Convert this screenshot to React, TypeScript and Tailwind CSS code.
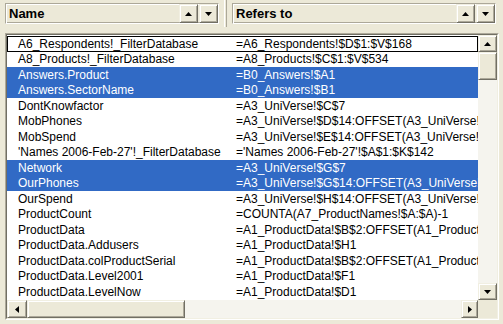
import React from "react";

const ROWS: [string, string, boolean][] = [
  ["A6_Respondents!_FilterDatabase", "=A6_Respondents!$D$1:$V$168", false],
  ["A8_Products!_FilterDatabase", "=A8_Products!$C$1:$V$534", false],
  ["Answers.Product", "=B0_Answers!$A1", true],
  ["Answers.SectorName", "=B0_Answers!$B1", true],
  ["DontKnowfactor", "=A3_UniVerse!$C$7", false],
  ["MobPhones", "=A3_UniVerse!$D$14:OFFSET(A3_UniVerse!$D$14,0,0)", false],
  ["MobSpend", "=A3_UniVerse!$E$14:OFFSET(A3_UniVerse!$E$14,0,0)", false],
  ["'Names 2006-Feb-27'!_FilterDatabase", "='Names 2006-Feb-27'!$A$1:$K$142", false],
  ["Network", "=A3_UniVerse!$G$7", true],
  ["OurPhones", "=A3_UniVerse!$G$14:OFFSET(A3_UniVerse!$G$14,0,0)", true],
  ["OurSpend", "=A3_UniVerse!$H$14:OFFSET(A3_UniVerse!$H$14,0,0)", false],
  ["ProductCount", "=COUNTA(A7_ProductNames!$A:$A)-1", false],
  ["ProductData", "=A1_ProductData!$B$2:OFFSET(A1_ProductData!$B$2,0,0)", false],
  ["ProductData.Addusers", "=A1_ProductData!$H1", false],
  ["ProductData.colProductSerial", "=A1_ProductData!$B$2:OFFSET(A1_ProductData!$B$2,0,0)", false],
  ["ProductData.Level2001", "=A1_ProductData!$F1", false],
  ["ProductData.LevelNow", "=A1_ProductData!$D1", false],
  ["ProductData.Sel2001", "=A1_ProductData!$E1", false],
];

function Arrow({ dir }: { dir: "up" | "down" | "left" | "right" }) {
  const pts = {
    up: "0,4 3.5,0 7,4",
    down: "0,0 7,0 3.5,4",
    left: "4,0 4,7 0,3.5",
    right: "0,0 0,7 4,3.5",
  }[dir];
  const vert = dir === "up" || dir === "down";
  return (
    <svg width={vert ? 7 : 4} height={vert ? 4 : 7} viewBox={vert ? "0 0 7 4" : "0 0 4 7"}>
      <polygon points={pts} fill="#000" />
    </svg>
  );
}

const raised =
  "bg-[#ece9d8] border border-t-[#f1efe2] border-l-[#f1efe2] border-r-[#716f64] border-b-[#716f64] shadow-[inset_1px_1px_0_#fff,inset_-1px_-1px_0_#aca899]";

function Btn({ dir, className = "" }: { dir: "up" | "down" | "left" | "right"; className?: string }) {
  return (
    <div className={`flex items-center justify-center shrink-0 ${raised} ${className}`}>
      <Arrow dir={dir} />
    </div>
  );
}

function HeaderBox({ label, className }: { label: string; className: string }) {
  return (
    <div
      className={`flex items-center h-[21px] border border-t-[#aca899] border-l-[#aca899] border-r-white border-b-white shadow-[inset_1px_1px_0_#fff,inset_-1px_-1px_0_#aca899] ${className}`}
    >
      <span className="flex-1 pl-[3px] font-bold text-[13px] text-black">{label}</span>
      <Btn dir="up" className="w-[19px] h-[19px]" />
      <Btn dir="down" className="w-[19px] h-[19px] ml-[1px]" />
    </div>
  );
}

export default function App() {
  return (
    <div
      className="w-[503px] h-[324px] bg-[#ece9d8] overflow-hidden"
      style={{ fontFamily: '"Liberation Sans", Arial, sans-serif' }}
    >
      <div className="flex items-start h-[33px] pt-[3px] pl-[5px]">
        <HeaderBox label="Name" className="w-[214px]" />
        <div className="w-[13px] h-[27px] -mt-[3px] flex justify-center">
          <div className="w-[3px] h-full border-l border-l-white border-r border-r-[#aca899]" />
        </div>
        <HeaderBox label="Refers to" className="w-[264px]" />
      </div>

      <div className="ml-[5px] w-[494px] h-[287px] border border-t-[#aca899] border-l-[#aca899] border-r-white border-b-white">
        <div className="flex h-full border border-t-[#716f64] border-l-[#716f64] border-r-[#f1efe2] border-b-[#f1efe2]">
          <div className="flex flex-col flex-1 min-w-0">
            <div className="flex-1 bg-white overflow-hidden pt-[1px]">
              {ROWS.map(([name, ref, sel], i) => (
                <div
                  key={i}
                  className={`flex items-center h-[15.5px] whitespace-nowrap text-[12px] leading-[14px] ${
                    sel ? "bg-[#316ac5] text-white" : "text-black"
                  } ${i === 0 ? "outline outline-1 outline-black -outline-offset-1" : ""}`}
                >
                  <span className="w-[229px] shrink-0 pl-[11px] overflow-hidden">{name}</span>
                  <span className="shrink-0">{ref}</span>
                </div>
              ))}
            </div>
            <div className="flex h-[18px] shrink-0 bg-[#f5f4ee]">
              <Btn dir="left" className="w-[20px] h-full" />
              <div className={`w-[158px] h-full ${raised}`} />
              <div className="flex-1" />
              <Btn dir="right" className="w-[17px] h-full" />
            </div>
          </div>
          <div className="flex flex-col w-[19px] shrink-0 bg-[#f5f4ee]">
            <Btn dir="up" className="h-[17px]" />
            <div className={`h-[28px] ${raised}`} />
            <div className="flex-1" />
            <Btn dir="down" className="h-[17px]" />
            <div className="h-[18px] bg-[#ece9d8]" />
          </div>
        </div>
      </div>
    </div>
  );
}
